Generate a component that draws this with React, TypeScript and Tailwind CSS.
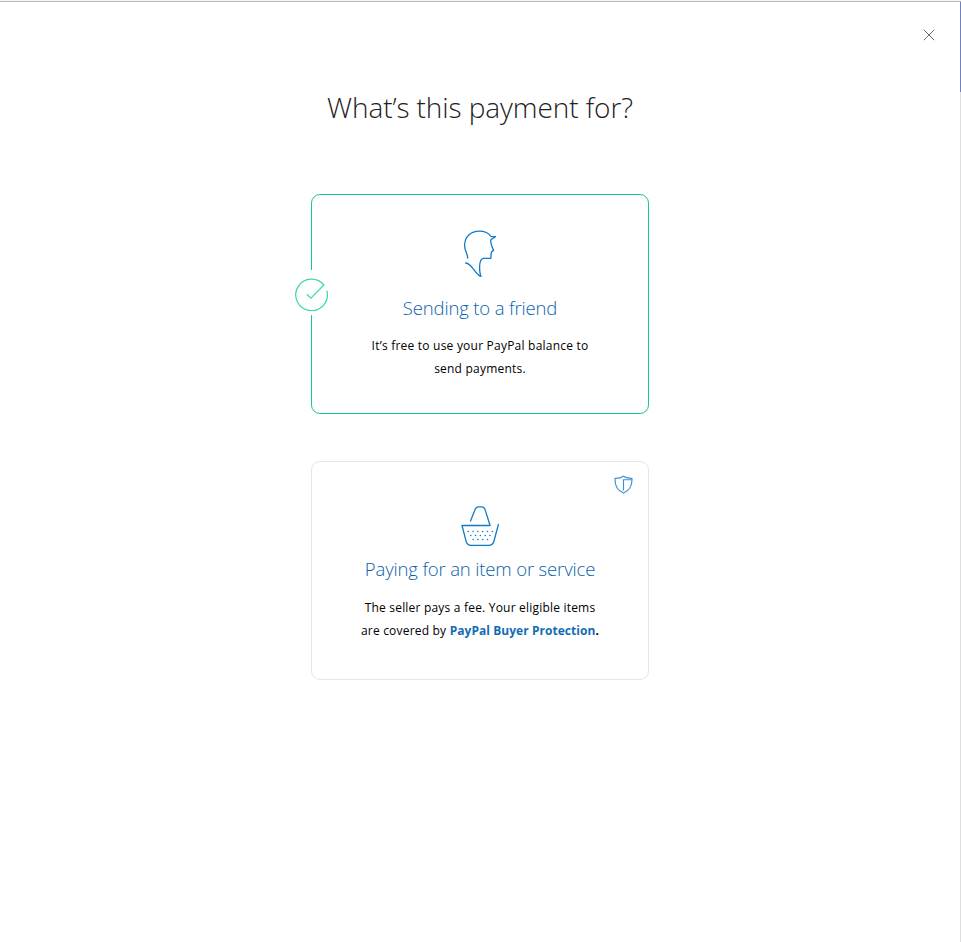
import React from "react";

function FriendIcon() {
  return (
    <svg width="60" height="65" viewBox="0 0 60 65" fill="none" stroke="#0f7ac6" strokeWidth="1.3" strokeLinecap="round" strokeLinejoin="round">
      <path d="M17.7 38.2C17.7 33.6 14.6 31.2 14.6 25.5C14.6 16.6 21 11.1 29.3 11.1C34 11.1 38.4 12.6 41 16.5L45.5 16.7L40.8 19.8C40.3 23.2 41.9 26.8 43.6 30.4L41.4 32L40.8 38.3H33.4C30.8 38.5 29.7 42 29.6 47C29.6 51 29.9 54 31 56.4C25.4 55.1 22.3 43.4 15.7 43" />
    </svg>
  );
}

function BasketIcon() {
  return (
    <svg width="60" height="60" viewBox="0 0 60 60" fill="none" stroke="#0f7ac6" strokeWidth="1.3" strokeLinecap="round" strokeLinejoin="round">
      <path d="M20.5 26L24.7 15.4C25.7 12.6 26.6 11.9 28.4 11.9H31.7C33.5 11.9 34.6 12.8 35.3 15.4L40.1 30.5H12L16 45.8C16.7 49 18.4 50.4 21.3 50.4H38.5C41.4 50.4 43.2 49 44 46L48.4 29.5" />
      <path d="M18.2 36.5H43M20.7 40.5H41M23.1 44.5H38.5" strokeWidth="1.5" strokeDasharray="0.1 4.7" />
    </svg>
  );
}

function ShieldIcon() {
  return (
    <svg className="absolute left-[302px] top-[13px]" width="19" height="20" viewBox="0 0 19 20" fill="none" stroke="#3b91cf" strokeWidth="1.15" strokeLinejoin="round">
      <path d="M9.5 1.2C7.3 2.7 4.4 3.5 1 3.4C.7 10.7 3.1 15.4 9.5 18C15.9 15.4 18.3 10.7 18 3.4C14.6 3.5 11.7 2.7 9.5 1.2Z" />
      <path d="M9.5 15.5V4.7H17.8" />
    </svg>
  );
}

function CheckMark() {
  return (
    <span className="absolute -left-[18px] top-[75px] flex h-[45px] w-[36px] items-center justify-center bg-white pt-[2px]">
      <svg width="34" height="34" viewBox="0 0 34 34" fill="none" stroke="#3dd9a3" strokeWidth="1.25">
        <path d="M31.8 13.7A15.8 15.8 0 1 1 28.9 8L15.9 21.1L11.7 17.2" />
      </svg>
    </span>
  );
}

function CardTitle({ children }: { children: React.ReactNode }) {
  return <h2 className="whitespace-nowrap text-[18.5px] leading-6 font-light tracking-[-0.15px] text-[#0b62ab]">{children}</h2>;
}

export default function App() {
  return (
    <div className="h-[942px] w-full bg-[#f6f6f6] pt-px font-['Open_Sans','Noto_Sans',sans-serif]">
      <div className="flex h-[941px] border-t border-[#b9b9b9] bg-white">
        <main className="relative flex flex-1 flex-col items-center pt-[85px]">
          <button aria-label="Close" className="absolute right-[25px] top-[27px]">
            <svg width="12" height="12" viewBox="0 0 12 12" stroke="#6c6c6c" strokeWidth="1">
              <path d="M.8.8L11.2 11.2M11.2.8L.8 11.2" />
            </svg>
          </button>
          <h1 className="h-10 whitespace-nowrap text-[28px] leading-10 font-light tracking-[-0.08px] text-[#1f2122]">What’s this payment for?</h1>
          <section className="relative mt-[67px] flex h-[220px] w-[338px] flex-col items-center rounded-[9px] border border-[#12cb91] pt-[25px]">
            <CheckMark />
            <FriendIcon />
            <div className="mt-[11px]"><CardTitle>Sending to a friend</CardTitle></div>
            <p className="mt-[14px] whitespace-nowrap text-center text-[12px] leading-[23px] tracking-[0.22px] text-black">
              It’s free to use your PayPal balance to<br />send payments.
            </p>
          </section>
          <section className="relative mt-[47px] flex h-[219px] w-[338px] flex-col items-center rounded-[9px] border border-[#e1e7eb] pt-[33px]">
            <ShieldIcon />
            <BasketIcon />
            <div className="mt-[2px]"><CardTitle>Paying for an item or service</CardTitle></div>
            <p className="mt-[15px] whitespace-nowrap text-center text-[12px] leading-[23px] tracking-[0.2px] text-black">
              The seller pays a fee. Your eligible items<br />are covered by <a className="font-bold tracking-[0.05px] text-[#136cb5]">PayPal Buyer Protection</a><b>.</b>
            </p>
          </section>
        </main>
        <aside className="flex w-px flex-col bg-[#dedede]">
          <div className="h-[90px] bg-[#7081bd]" />
        </aside>
      </div>
    </div>
  );
}
